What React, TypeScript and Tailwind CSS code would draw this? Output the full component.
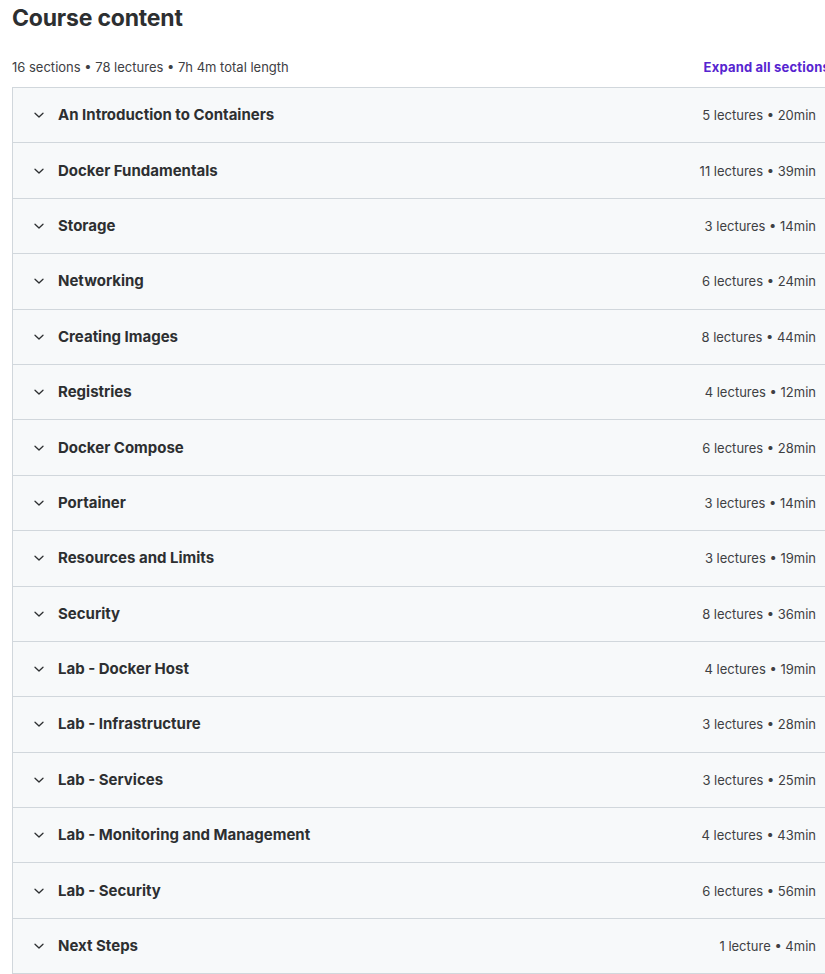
const sections = [
  { title: "An Introduction to Containers", meta: "5 lectures • 20min" },
  { title: "Docker Fundamentals", meta: "11 lectures • 39min" },
  { title: "Storage", meta: "3 lectures • 14min" },
  { title: "Networking", meta: "6 lectures • 24min" },
  { title: "Creating Images", meta: "8 lectures • 44min" },
  { title: "Registries", meta: "4 lectures • 12min" },
  { title: "Docker Compose", meta: "6 lectures • 28min" },
  { title: "Portainer", meta: "3 lectures • 14min" },
  { title: "Resources and Limits", meta: "3 lectures • 19min" },
  { title: "Security", meta: "8 lectures • 36min" },
  { title: "Lab - Docker Host", meta: "4 lectures • 19min" },
  { title: "Lab - Infrastructure", meta: "3 lectures • 28min" },
  { title: "Lab - Services", meta: "3 lectures • 25min" },
  { title: "Lab - Monitoring and Management", meta: "4 lectures • 43min" },
  { title: "Lab - Security", meta: "6 lectures • 56min" },
  { title: "Next Steps", meta: "1 lecture • 4min" },
];

function Chevron() {
  return (
    <svg width="12" height="12" viewBox="0 0 12 12" fill="none" className="shrink-0">
      <path d="M2 4.2 L6 8 L10 4.2" stroke="#2d2f31" strokeWidth="1.3" strokeLinecap="round" strokeLinejoin="round" />
    </svg>
  );
}

export default function App() {
  return (
    <div className="w-full overflow-hidden bg-white font-['Inter','Noto_Sans',sans-serif] text-[#2d2f31]">
      <div className="ml-3 w-[828px]">
        <h2 className="pt-[3px] text-[23px] font-bold leading-[30px] tracking-[-0.2px]">Course content</h2>

        <div className="mt-[24px] flex items-center justify-between pr-[10px]">
          <span className="text-[13px] leading-[20px] text-[#3e4043]">16 sections • 78 lectures • 7h 4m total length</span>
          <button className="text-[13px] font-bold leading-[20px] tracking-[0.2px] text-[#5624d0]">Expand all sections</button>
        </div>

        <div className="mt-[10px] border-t border-l border-[#d1d7dc]">
          {sections.map((s) => (
            <div
              key={s.title}
              className="flex h-[55.4px] items-center justify-between border-b border-[#d1d7dc] bg-[#f7f9fa] pl-[20px] pr-[24px]"
            >
              <div className="flex items-center gap-[13px]">
                <Chevron />
                <span className="text-[15px] font-bold leading-[20px]">{s.title}</span>
              </div>
              <span className="text-[13px] leading-[20px] text-[#3e4043]">{s.meta}</span>
            </div>
          ))}
        </div>
      </div>
    </div>
  );
}
